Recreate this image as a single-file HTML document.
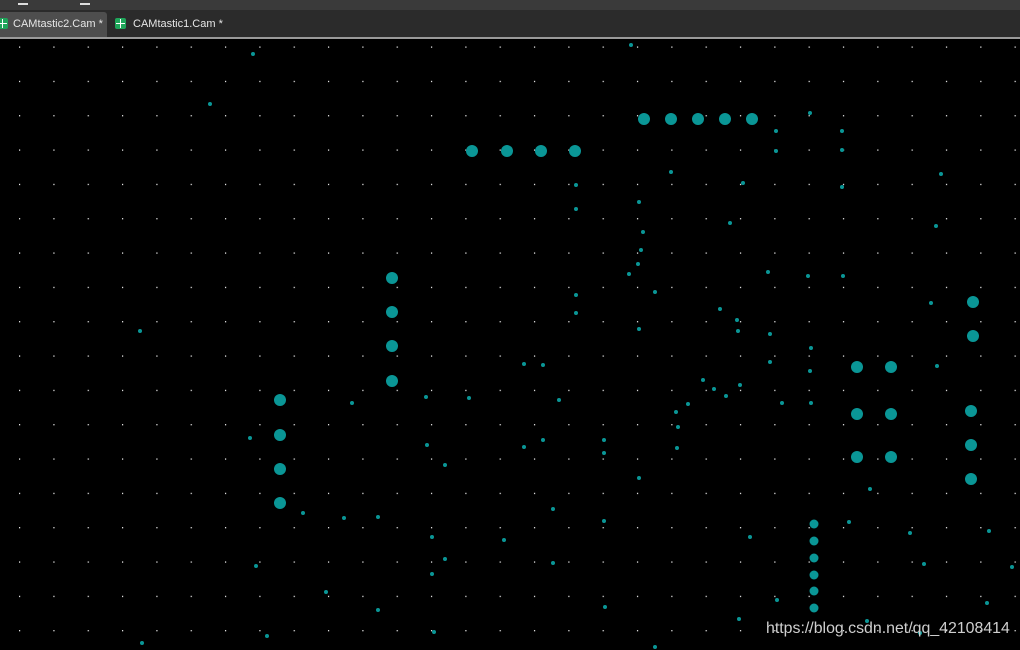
<!DOCTYPE html>
<html><head><meta charset="utf-8"><style>
html,body{margin:0;padding:0;width:1020px;height:650px;overflow:hidden;background:#000;font-family:"Liberation Sans",sans-serif}
#top{position:absolute;left:0;top:0;width:1020px;height:10px;background:#3a3a3a}
#tabs{position:absolute;left:0;top:10px;width:1020px;height:27px;background:#2b2b2b}
#line{position:absolute;left:0;top:37px;width:1020px;height:2px;background:#9a9a9a}
.tab{position:absolute;top:2px;height:25px;color:#e6e6e6;font-size:11px;line-height:24px;white-space:nowrap}
.ic{position:absolute;top:6px;width:11px;height:11px;background:#1fa55a;border-radius:2px}
.ic:before{content:"";position:absolute;left:5px;top:1px;width:1px;height:9px;background:#fff}
.ic:after{content:"";position:absolute;left:1px;top:5px;width:9px;height:1px;background:#fff}
#wm{position:absolute;left:766px;top:620px;color:#cfcfcf;font-size:15.9px;white-space:nowrap}
</style></head><body>
<div id="top"><div style="position:absolute;left:18px;top:3px;width:10px;height:2px;background:#ddd"></div><div style="position:absolute;left:80px;top:3px;width:10px;height:2px;background:#ddd"></div></div>
<div id="tabs">
<div class="tab" style="left:0;width:107px;background:#4e4e4e;border-radius:0 3px 0 0"><span class="ic" style="left:-3px"></span><span style="position:absolute;left:13px">CAMtastic2.Cam *</span></div>
<div class="tab" style="left:110px;width:120px"><span class="ic" style="left:5px"></span><span style="position:absolute;left:23px">CAMtastic1.Cam *</span></div>
</div>
<div id="line"></div>
<svg style="position:absolute;left:0;top:39px" width="1020" height="611">
<defs><pattern id="g" x="19" y="7.5" width="34.33" height="34.33" patternUnits="userSpaceOnUse"><rect width="1.2" height="1.2" fill="#ffffff"/></pattern></defs>
<rect width="1020" height="611" fill="url(#g)"/>
<g transform="translate(0,-39)" fill="#0a9696">
<g id="big">
<circle cx="644" cy="119" r="6"/><circle cx="671" cy="119" r="6"/><circle cx="698" cy="119" r="6"/><circle cx="725" cy="119" r="6"/><circle cx="752" cy="119" r="6"/>
<circle cx="472" cy="151" r="6"/><circle cx="507" cy="151" r="6"/><circle cx="541" cy="151" r="6"/><circle cx="575" cy="151" r="6"/>
<circle cx="392" cy="278" r="6"/><circle cx="392" cy="312" r="6"/><circle cx="392" cy="346" r="6"/><circle cx="392" cy="381" r="6"/>
<circle cx="280" cy="400" r="6"/><circle cx="280" cy="435" r="6"/><circle cx="280" cy="469" r="6"/><circle cx="280" cy="503" r="6"/>
<circle cx="857" cy="367" r="6"/><circle cx="891" cy="367" r="6"/><circle cx="857" cy="414" r="6"/><circle cx="891" cy="414" r="6"/><circle cx="857" cy="457" r="6"/><circle cx="891" cy="457" r="6"/>
<circle cx="973" cy="302" r="6"/><circle cx="973" cy="336" r="6"/><circle cx="971" cy="411" r="6"/><circle cx="971" cy="445" r="6"/><circle cx="971" cy="479" r="6"/>
<circle cx="814" cy="524" r="4.5"/><circle cx="814" cy="541" r="4.5"/><circle cx="814" cy="558" r="4.5"/><circle cx="814" cy="575" r="4.5"/><circle cx="814" cy="591" r="4.5"/><circle cx="814" cy="608" r="4.5"/>
</g>
<g>
<circle cx="253" cy="54" r="2"/><circle cx="631" cy="45" r="2"/><circle cx="210" cy="104" r="2"/><circle cx="776" cy="131" r="2"/><circle cx="842" cy="131" r="2"/><circle cx="810" cy="113" r="2"/><circle cx="776" cy="151" r="2"/><circle cx="842" cy="150" r="2"/><circle cx="576" cy="185" r="2"/><circle cx="671" cy="172" r="2"/><circle cx="743" cy="183" r="2"/><circle cx="842" cy="187" r="2"/><circle cx="941" cy="174" r="2"/><circle cx="639" cy="202" r="2"/><circle cx="576" cy="209" r="2"/><circle cx="730" cy="223" r="2"/><circle cx="936" cy="226" r="2"/><circle cx="643" cy="232" r="2"/><circle cx="641" cy="250" r="2"/><circle cx="638" cy="264" r="2"/><circle cx="629" cy="274" r="2"/><circle cx="768" cy="272" r="2"/><circle cx="808" cy="276" r="2"/><circle cx="843" cy="276" r="2"/><circle cx="576" cy="295" r="2"/><circle cx="655" cy="292" r="2"/><circle cx="931" cy="303" r="2"/><circle cx="720" cy="309" r="2"/><circle cx="576" cy="313" r="2"/><circle cx="737" cy="320" r="2"/><circle cx="140" cy="331" r="2"/><circle cx="639" cy="329" r="2"/><circle cx="770" cy="334" r="2"/><circle cx="738" cy="331" r="2"/><circle cx="811" cy="348" r="2"/><circle cx="524" cy="364" r="2"/><circle cx="543" cy="365" r="2"/><circle cx="770" cy="362" r="2"/><circle cx="810" cy="371" r="2"/><circle cx="937" cy="366" r="2"/><circle cx="703" cy="380" r="2"/><circle cx="714" cy="389" r="2"/><circle cx="740" cy="385" r="2"/><circle cx="726" cy="396" r="2"/><circle cx="426" cy="397" r="2"/><circle cx="469" cy="398" r="2"/><circle cx="352" cy="403" r="2"/><circle cx="559" cy="400" r="2"/><circle cx="782" cy="403" r="2"/><circle cx="811" cy="403" r="2"/><circle cx="688" cy="404" r="2"/><circle cx="676" cy="412" r="2"/><circle cx="678" cy="427" r="2"/><circle cx="250" cy="438" r="2"/><circle cx="543" cy="440" r="2"/><circle cx="604" cy="440" r="2"/><circle cx="427" cy="445" r="2"/><circle cx="524" cy="447" r="2"/><circle cx="604" cy="453" r="2"/><circle cx="677" cy="448" r="2"/><circle cx="445" cy="465" r="2"/><circle cx="639" cy="478" r="2"/><circle cx="870" cy="489" r="2"/><circle cx="553" cy="509" r="2"/><circle cx="303" cy="513" r="2"/><circle cx="344" cy="518" r="2"/><circle cx="378" cy="517" r="2"/><circle cx="604" cy="521" r="2"/><circle cx="849" cy="522" r="2"/><circle cx="432" cy="537" r="2"/><circle cx="504" cy="540" r="2"/><circle cx="750" cy="537" r="2"/><circle cx="910" cy="533" r="2"/><circle cx="989" cy="531" r="2"/><circle cx="445" cy="559" r="2"/><circle cx="553" cy="563" r="2"/><circle cx="256" cy="566" r="2"/><circle cx="924" cy="564" r="2"/><circle cx="432" cy="574" r="2"/><circle cx="1012" cy="567" r="2"/><circle cx="326" cy="592" r="2"/><circle cx="777" cy="600" r="2"/><circle cx="987" cy="603" r="2"/><circle cx="378" cy="610" r="2"/><circle cx="605" cy="607" r="2"/><circle cx="739" cy="619" r="2"/><circle cx="867" cy="621" r="2"/><circle cx="434" cy="632" r="2"/><circle cx="267" cy="636" r="2"/><circle cx="142" cy="643" r="2"/><circle cx="655" cy="647" r="2"/><circle cx="920" cy="633" r="2"/>
</g>
</g>
</svg>
<div id="wm">https://blog.csdn.net/qq_42108414</div>
</body></html>
